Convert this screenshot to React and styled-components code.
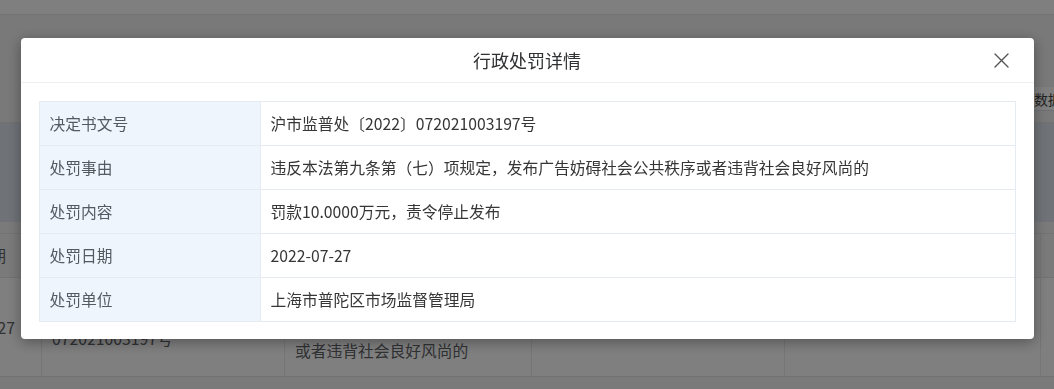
import React from "react";
import styled, { createGlobalStyle } from "styled-components";

const Global = createGlobalStyle`
  html, body { margin: 0; padding: 0; }
  body {
    font-family: "Noto Sans CJK SC", "Noto Sans", sans-serif;
    background: #fff;
    overflow: hidden;
  }
  * { box-sizing: border-box; }
`;

const Page = styled.div`
  width: 1054px;
  height: 389px;
  background: #f4f4f5;
  overflow: hidden;
  color: #606266;
`;

const TopBar = styled.div`
  height: 15px;
  background: #fff;
  border-bottom: 1px solid #e4e4ee;
`;

const Toolbar = styled.div`
  height: 108px;
  display: flex;
  align-items: flex-end;
  padding: 0 0 11px 1026px;
  background: #f2f2f2;
  border-bottom: 1px solid #e2e2e2;
  white-space: nowrap;
`;

const ToolButton = styled.div`
  height: 24px;
  padding: 0 8px;
  display: flex;
  align-items: center;
  font-size: 14px;
  color: #444;
  background: #fff;
  border-bottom: 1px solid #dcdfe6;
`;

const FilterPanel = styled.div`
  height: 99px;
  background: #dfe6ef;
`;

const Gap = styled.div`
  height: 12px;
  background: #f4f4f4;
  border-bottom: 1px solid #e6e6e6;
`;

const TableScroll = styled.div`
  overflow: hidden;
  background: #fff;
`;

const BgTable = styled.div`
  margin-left: -92px;
  width: 1300px;
  display: grid;
  grid-template-columns: 134px 243px 247px 253px 256px 1fr;
`;

const BgCell = styled.div`
  display: flex;
  align-items: center;
  justify-content: ${(p) => (p.$center ? "center" : "flex-start")};
  text-align: ${(p) => (p.$center ? "center" : "left")};
  padding: 0 10px;
  height: ${(p) => (p.$head ? "44px" : "99px")};
  font-size: 15.75px;
  line-height: 23px;
  white-space: nowrap;
  overflow: hidden;
  color: #606266;
  background: ${(p) => (p.$head ? "#f5f5f5" : "#fff")};
  border-right: 1px solid #e8eaee;
  border-bottom: 1px solid #e3e5e9;
`;

const Overlay = styled.div`
  position: fixed;
  inset: 0;
  background: rgba(0, 0, 0, 0.5);
  padding-top: 38px;
`;

const Dialog = styled.div`
  width: 1013px;
  margin: 0 auto;
  background: #fff;
  border-radius: 4px;
  box-shadow: 0 3px 14px rgba(0, 0, 0, 0.35);
`;

const DialogHeader = styled.div`
  height: 45px;
  display: grid;
  grid-template-columns: 1fr auto 1fr;
  align-items: center;
  padding: 0 24px;
  border-bottom: 1px solid #edeff2;
`;

const Title = styled.div`
  grid-column: 2;
  font-size: 18px;
  color: #303133;
`;

const CloseButton = styled.button`
  grid-column: 3;
  justify-self: end;
  width: 16px;
  height: 16px;
  padding: 0;
  border: none;
  background: none;
  display: flex;
  align-items: center;
  justify-content: center;
  cursor: pointer;
  color: #555;
`;

const DialogBody = styled.div`
  padding: 18px 18px 17px 18px;
`;

const Table = styled.div`
  display: grid;
  grid-template-columns: 221px 1fr;
  border-top: 1px solid #e6ebf1;
  border-left: 1px solid #e6ebf1;
`;

const Cell = styled.div`
  padding: 11px 10px;
  line-height: 21px;
  font-size: 15.75px;
  border-right: 1px solid #e6ebf1;
  border-bottom: 1px solid #e6ebf1;
  color: ${(p) => (p.$label ? "#555a61" : "#363636")};
  background: ${(p) => (p.$label ? "#eef5fd" : "#fff")};
`;

const rows = [
  ["决定书文号", "沪市监普处〔2022〕072021003197号"],
  ["处罚事由", "违反本法第九条第（七）项规定，发布广告妨碍社会公共秩序或者违背社会良好风尚的"],
  ["处罚内容", "罚款10.0000万元，责令停止发布"],
  ["处罚日期", "2022-07-27"],
  ["处罚单位", "上海市普陀区市场监督管理局"],
];

const CloseIcon = () => (
  <svg width="15" height="15" viewBox="0 0 15 15" fill="none">
    <path d="M1 1L14 14M14 1L1 14" stroke="currentColor" strokeWidth="1.4" strokeLinecap="round" />
  </svg>
);

export default function App() {
  return (
    <>
      <Global />
      <Page>
        <TopBar />
        <Toolbar>
          <ToolButton>数据导出</ToolButton>
        </Toolbar>
        <FilterPanel />
        <Gap />
        <TableScroll>
          <BgTable>
            <BgCell $head $center>处罚日期</BgCell>
            <BgCell $head>决定书文号</BgCell>
            <BgCell $head>处罚事由</BgCell>
            <BgCell $head>处罚内容</BgCell>
            <BgCell $head>处罚单位</BgCell>
            <BgCell $head />
            <BgCell $center>2022-07-27</BgCell>
            <BgCell>沪市监普处〔2022〕<br />072021003197号</BgCell>
            <BgCell>
              违反本法第九条第（七）项规定，
              <br />
              发布广告妨碍社会公共秩序
              <br />
              或者违背社会良好风尚的
            </BgCell>
            <BgCell>罚款10.0000万元，责令停止发布</BgCell>
            <BgCell>上海市普陀区市场监督管理局</BgCell>
            <BgCell />
          </BgTable>
        </TableScroll>
      </Page>
      <Overlay>
        <Dialog>
          <DialogHeader>
            <Title>行政处罚详情</Title>
            <CloseButton aria-label="关闭">
              <CloseIcon />
            </CloseButton>
          </DialogHeader>
          <DialogBody>
            <Table>
              {rows.map(([label, value]) => (
                <React.Fragment key={label}>
                  <Cell $label>{label}</Cell>
                  <Cell>{value}</Cell>
                </React.Fragment>
              ))}
            </Table>
          </DialogBody>
        </Dialog>
      </Overlay>
    </>
  );
}
